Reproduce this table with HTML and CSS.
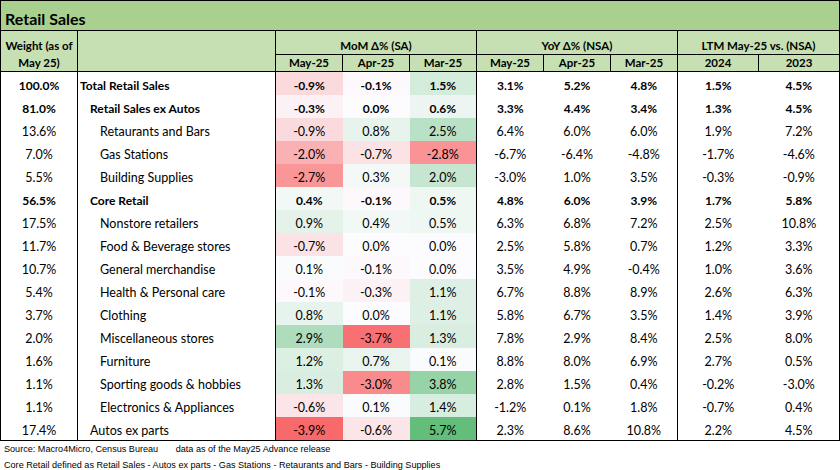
FILE: index.html
```html
<!DOCTYPE html>
<html>
<head>
<meta charset="utf-8">
<link rel="stylesheet" href="styles.css">
</head>
<body>
<table class="sheet">
<colgroup>
<col class="c-w"><col class="c-n"><col class="c-v"><col class="c-v"><col class="c-v"><col class="c-v"><col class="c-v"><col class="c-v"><col class="c-l"><col class="c-l">
</colgroup>
<thead>
<tr class="title-row"><th colspan="10" class="title">Retail Sales</th></tr>
<tr class="h1">
<th rowspan="2" class="hw">Weight (as of<br>May 25)</th>
<th rowspan="2" class="hn"></th>
<th colspan="3" class="grp">MoM Δ% (SA)</th>
<th colspan="3" class="grp">YoY Δ% (NSA)</th>
<th colspan="2" class="grp">LTM May-25 vs. (NSA)</th>
</tr>
<tr class="h2">
<th>May-25</th><th>Apr-25</th><th>Mar-25</th>
<th>May-25</th><th>Apr-25</th><th>Mar-25</th>
<th>2024</th><th>2023</th>
</tr>
</thead>
<tbody>
<tr class="b"><td class="w">100.0%</td><td class="n l0">Total Retail Sales</td><td class="m" style="background:rgb(251,218,221)">-0.9%</td><td class="m" style="background:rgb(252,248,251)">-0.1%</td><td class="m" style="background:rgb(212,236,220)">1.5%</td><td class="y g">3.1%</td><td class="y">5.2%</td><td class="y">4.8%</td><td class="t g">1.5%</td><td class="t">4.5%</td></tr>
<tr class="b"><td class="w">81.0%</td><td class="n l1">Retail Sales ex Autos</td><td class="m" style="background:rgb(252,241,244)">-0.3%</td><td class="m" style="background:rgb(252,252,255)">0.0%</td><td class="m" style="background:rgb(236,245,241)">0.6%</td><td class="y g">3.3%</td><td class="y">4.4%</td><td class="y">3.4%</td><td class="t g">1.3%</td><td class="t">4.5%</td></tr>
<tr><td class="w">13.6%</td><td class="n l2">Retaurants and Bars</td><td class="m" style="background:rgb(251,218,221)">-0.9%</td><td class="m" style="background:rgb(231,243,237)">0.8%</td><td class="m" style="background:rgb(185,225,197)">2.5%</td><td class="y g">6.4%</td><td class="y">6.0%</td><td class="y">6.0%</td><td class="t g">1.9%</td><td class="t">7.2%</td></tr>
<tr><td class="w">7.0%</td><td class="n l2">Gas Stations</td><td class="m" style="background:rgb(250,177,179)">-2.0%</td><td class="m" style="background:rgb(251,226,228)">-0.7%</td><td class="m" style="background:rgb(249,147,149)">-2.8%</td><td class="y g">-6.7%</td><td class="y">-6.4%</td><td class="y">-4.8%</td><td class="t g">-1.7%</td><td class="t">-4.6%</td></tr>
<tr><td class="w">5.5%</td><td class="n l2">Building Supplies</td><td class="m" style="background:rgb(249,150,152)">-2.7%</td><td class="m" style="background:rgb(244,249,248)">0.3%</td><td class="m" style="background:rgb(198,230,209)">2.0%</td><td class="y g">-3.0%</td><td class="y">1.0%</td><td class="y">3.5%</td><td class="t g">-0.3%</td><td class="t">-0.9%</td></tr>
<tr class="b"><td class="w">56.5%</td><td class="n l1">Core Retail</td><td class="m" style="background:rgb(241,248,246)">0.4%</td><td class="m" style="background:rgb(252,248,251)">-0.1%</td><td class="m" style="background:rgb(239,247,243)">0.5%</td><td class="y g">4.8%</td><td class="y">6.0%</td><td class="y">3.9%</td><td class="t g">1.7%</td><td class="t">5.8%</td></tr>
<tr><td class="w">17.5%</td><td class="n l2">Nonstore retailers</td><td class="m" style="background:rgb(228,242,234)">0.9%</td><td class="m" style="background:rgb(241,248,246)">0.4%</td><td class="m" style="background:rgb(239,247,243)">0.5%</td><td class="y g">6.3%</td><td class="y">6.8%</td><td class="y">7.2%</td><td class="t g">2.5%</td><td class="t">10.8%</td></tr>
<tr><td class="w">11.7%</td><td class="n l2">Food &amp; Beverage stores</td><td class="m" style="background:rgb(251,226,228)">-0.7%</td><td class="m" style="background:rgb(252,252,255)">0.0%</td><td class="m" style="background:rgb(252,252,255)">0.0%</td><td class="y g">2.5%</td><td class="y">5.8%</td><td class="y">0.7%</td><td class="t g">1.2%</td><td class="t">3.3%</td></tr>
<tr><td class="w">10.7%</td><td class="n l2">General merchandise</td><td class="m" style="background:rgb(249,251,253)">0.1%</td><td class="m" style="background:rgb(252,248,251)">-0.1%</td><td class="m" style="background:rgb(252,252,255)">0.0%</td><td class="y g">3.5%</td><td class="y">4.9%</td><td class="y">-0.4%</td><td class="t g">1.0%</td><td class="t">3.6%</td></tr>
<tr><td class="w">5.4%</td><td class="n l2">Health &amp; Personal care</td><td class="m" style="background:rgb(252,248,251)">-0.1%</td><td class="m" style="background:rgb(252,241,244)">-0.3%</td><td class="m" style="background:rgb(222,240,229)">1.1%</td><td class="y g">6.7%</td><td class="y">8.8%</td><td class="y">8.9%</td><td class="t g">2.6%</td><td class="t">6.3%</td></tr>
<tr><td class="w">3.7%</td><td class="n l2">Clothing</td><td class="m" style="background:rgb(231,243,237)">0.8%</td><td class="m" style="background:rgb(252,252,255)">0.0%</td><td class="m" style="background:rgb(222,240,229)">1.1%</td><td class="y g">5.8%</td><td class="y">6.7%</td><td class="y">3.5%</td><td class="t g">1.4%</td><td class="t">3.9%</td></tr>
<tr><td class="w">2.0%</td><td class="n l2">Miscellaneous stores</td><td class="m" style="background:rgb(174,220,188)">2.9%</td><td class="m" style="background:rgb(248,112,115)">-3.7%</td><td class="m" style="background:rgb(217,238,225)">1.3%</td><td class="y g">7.8%</td><td class="y">2.9%</td><td class="y">8.4%</td><td class="t g">2.5%</td><td class="t">8.0%</td></tr>
<tr><td class="w">1.6%</td><td class="n l2">Furniture</td><td class="m" style="background:rgb(220,239,227)">1.2%</td><td class="m" style="background:rgb(233,244,239)">0.7%</td><td class="m" style="background:rgb(249,251,253)">0.1%</td><td class="y g">8.8%</td><td class="y">8.0%</td><td class="y">6.9%</td><td class="t g">2.7%</td><td class="t">0.5%</td></tr>
<tr><td class="w">1.1%</td><td class="n l2">Sporting goods &amp; hobbies</td><td class="m" style="background:rgb(217,238,225)">1.3%</td><td class="m" style="background:rgb(249,139,141)">-3.0%</td><td class="m" style="background:rgb(150,211,167)">3.8%</td><td class="y g">2.8%</td><td class="y">1.5%</td><td class="y">0.4%</td><td class="t g">-0.2%</td><td class="t">-3.0%</td></tr>
<tr><td class="w">1.1%</td><td class="n l2">Electronics &amp; Appliances</td><td class="m" style="background:rgb(251,229,232)">-0.6%</td><td class="m" style="background:rgb(249,251,253)">0.1%</td><td class="m" style="background:rgb(214,237,223)">1.4%</td><td class="y g">-1.2%</td><td class="y">0.1%</td><td class="y">1.8%</td><td class="t g">-0.7%</td><td class="t">0.4%</td></tr>
<tr class="last"><td class="w">17.4%</td><td class="n l1">Autos ex parts</td><td class="m" style="background:rgb(248,105,107)">-3.9%</td><td class="m" style="background:rgb(251,229,232)">-0.6%</td><td class="m" style="background:rgb(99,190,123)">5.7%</td><td class="y g">2.3%</td><td class="y">8.6%</td><td class="y">10.8%</td><td class="t g">2.2%</td><td class="t">4.5%</td></tr>
</tbody>
</table>
<div class="notes">
<p class="note">Source: Macro4Micro, Census Bureau <span class="gap"></span>data as of the May25 Advance release</p>
<p class="note">Core Retail defined as Retail Sales - Autos ex parts - Gas Stations - Retaurants and Bars - Building Supplies</p>
</div>
</body>
</html>
```
FILE: styles.css
```css
html, body {
  margin: 0;
  padding: 0;
  background: #ffffff;
}
body {
  font-family: "Lato", "Liberation Sans", sans-serif;
  color: #000;
}
.sheet {
  border-collapse: collapse;
  table-layout: fixed;
  width: 840px;
  font-size: 12.5px;
}
.c-w { width: 77px; }
.c-n { width: 198px; }
.c-v { width: 67px; }
.c-l { width: 81px; }
.sheet th, .sheet td {
  padding: 0;
  white-space: nowrap;
  overflow: hidden;
}
.title-row th {
  background: #a9d08e;
  border: 1px solid #000;
  text-align: left;
  padding: 8px 0 1px 4px;
  line-height: 20px;
  font-size: 16px;
  font-weight: 700;
}
.h1 th, .h2 th {
  background: #c6e0b4;
  font-weight: 700;
  font-size: 11.5px;
  border: 1px solid #000;
  text-align: center;
}
.h1 th {
  padding-top: 7px;
  line-height: 16px;
  vertical-align: bottom;
}
.h2 th {
  line-height: 16px;
  vertical-align: middle;
}
.h1 th.hw {
  line-height: 17px;
  padding: 0;
  vertical-align: bottom;
}
.sheet td {
  padding-top: 5px;
  line-height: 18px;
  vertical-align: bottom;
  text-align: center;
  border: none;
}
.sheet td.w { border-left: 1px solid #000; border-right: 1px solid #000; }
.sheet td.n { text-align: left; border-right: 1px solid #000; }
.sheet td.g { border-left: 1px solid #000; }
.sheet td.t:last-child { border-right: 1px solid #000; }
.sheet tr.b td { font-weight: 700; font-size: 12px; }
.sheet tr.last td { border-bottom: 1px solid #000; }
.sheet td.l0 { padding-left: 2px; }
.sheet td.l1 { padding-left: 12px; }
.sheet td.l2 { padding-left: 22px; }
.notes {
  padding-left: 4px;
  font-family: "Liberation Sans", sans-serif;
  font-size: 9.1px;
}
.note {
  margin: 0;
  line-height: 16px;
}
.gap { display: inline-block; width: 15px; }
```
